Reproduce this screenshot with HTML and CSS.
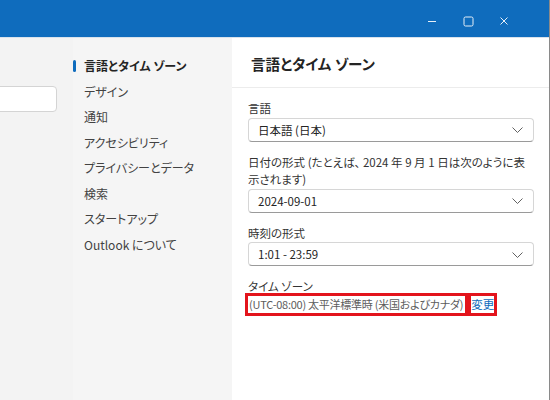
FILE: index.html
```html
<!DOCTYPE html>
<html lang="ja">
<head>
<meta charset="utf-8">
<link rel="stylesheet" href="styles.css">
</head>
<body>
<div class="window">
  <header class="titlebar">
    <div class="controls">
      <span class="ctl">
        <svg width="10" height="10" viewBox="0 0 10 10"><path d="M1 5.5h8" stroke="#fff" stroke-width="1"/></svg>
      </span>
      <span class="ctl">
        <svg width="11" height="11" viewBox="0 0 11 11"><rect x="1" y="1" width="9" height="9" rx="1.5" fill="none" stroke="#fff" stroke-width="1"/></svg>
      </span>
      <span class="ctl">
        <svg width="10" height="10" viewBox="0 0 10 10"><path d="M1.5 1.5l7 7M8.5 1.5l-7 7" stroke="#fff" stroke-width="1"/></svg>
      </span>
    </div>
  </header>
  <div class="body">
    <aside class="leftpane">
      <div class="search"></div>
    </aside>
    <nav class="nav">
      <div class="nav-item active"><span class="indicator"></span>言語とタイム ゾーン</div>
      <div class="nav-item">デザイン</div>
      <div class="nav-item">通知</div>
      <div class="nav-item">アクセシビリティ</div>
      <div class="nav-item">プライバシーとデータ</div>
      <div class="nav-item">検索</div>
      <div class="nav-item">スタートアップ</div>
      <div class="nav-item">Outlook について</div>
    </nav>
    <main class="content">
      <div class="content-header">言語とタイム ゾーン</div>
      <div class="form">
        <div class="field">
          <div class="label">言語</div>
          <div class="select"><span>日本語 (日本)</span><svg class="chev" width="11" height="6" viewBox="0 0 11 6"><path d="M0.5 0.5l5 5 5-5" fill="none" stroke="#616161" stroke-width="1"/></svg></div>
        </div>
        <div class="field">
          <div class="label">日付の形式 (たとえば、 2024 年 9 月 1 日は次のように表示されます)</div>
          <div class="select"><span>2024-09-01</span><svg class="chev" width="11" height="6" viewBox="0 0 11 6"><path d="M0.5 0.5l5 5 5-5" fill="none" stroke="#616161" stroke-width="1"/></svg></div>
        </div>
        <div class="field">
          <div class="label">時刻の形式</div>
          <div class="select"><span>1:01 - 23:59</span><svg class="chev" width="11" height="6" viewBox="0 0 11 6"><path d="M0.5 0.5l5 5 5-5" fill="none" stroke="#616161" stroke-width="1"/></svg></div>
        </div>
        <div class="field">
          <div class="label">タイム ゾーン</div>
          <div class="tz-row"><span class="tz boxed">(UTC-08:00) 太平洋標準時 (米国およびカナダ)</span><span class="link boxed">変更</span></div>
        </div>
      </div>
    </main>
  </div>
</div>
</body>
</html>
```
FILE: styles.css
```css
* { box-sizing: border-box; }
html, body {
  margin: 0;
  padding: 0;
  width: 550px;
  height: 400px;
  overflow: hidden;
  font-family: "Noto Sans CJK JP", sans-serif;
  font-feature-settings: "palt";
  font-size: 11.5px;
  color: #333;
  background: #f4f4f4;
}
.window {
  width: 550px;
  height: 400px;
  display: flex;
  flex-direction: column;
  border-right: 1px solid #8a8a8a;
}
.titlebar {
  height: 38px;
  background: #0f6cbd;
  border-bottom: 1px solid #d8e2ec;
  display: flex;
  justify-content: flex-end;
  flex-shrink: 0;
}
.controls {
  display: flex;
  padding-right: 27px;
  padding-top: 15px;
}
.ctl {
  width: 36px;
  height: 12px;
  display: flex;
  align-items: center;
  justify-content: center;
  opacity: 0.9;
}
.body {
  flex: 1;
  display: flex;
  min-height: 0;
}
.leftpane {
  width: 73px;
  background: #f3f3f3;
  padding-top: 48px;
}
.search {
  margin-left: -20px;
  width: 77px;
  height: 26px;
  background: #fff;
  border: 1px solid #d4d4d4;
  border-radius: 4px;
}
.nav {
  width: 159px;
  background: #f5f5f5;
  padding-top: 15px;
}
.nav-item {
  position: relative;
  height: 25.5px;
  line-height: 25.5px;
  padding-left: 11px;
  color: #424242;
  font-size: 12px;
  white-space: nowrap;
}
.nav-item.active {
  font-weight: 700;
  color: #242424;
}
.indicator {
  position: absolute;
  left: 0;
  top: 7px;
  width: 3px;
  height: 12px;
  border-radius: 2px;
  background: #0f6cbd;
}
.content {
  flex: 1;
  background: #fff;
  display: flex;
  flex-direction: column;
}
.content-header {
  height: 50px;
  line-height: 50px;
  padding-left: 19px;
  padding-top: 1px;
  font-size: 14.5px;
  font-weight: 700;
  color: #242424;
  border-bottom: 1px solid #ececec;
}
.form {
  padding: 12px 15px 0 16px;
  display: flex;
  flex-direction: column;
  gap: 12px;
}
.label {
  line-height: 17.5px;
  color: #333;
}
.select {
  height: 24px;
  border: 1px solid #d6d6d6;
  border-bottom-color: #9a9a9a;
  border-radius: 4px;
  display: flex;
  align-items: center;
  justify-content: space-between;
  padding: 0 10px 0 9px;
  color: #242424;
}
.select .chev { margin-top: 1px; }
.tz-row {
  display: flex;
  gap: 6px;
}
.boxed {
  display: inline-block;
  line-height: 17px;
  outline: 3px solid #e3141c;
}
.tz {
  color: #5c5c5c;
  font-size: 11px;
  letter-spacing: -0.25px;
  padding: 0 2px 0 1px;
}
.link {
  color: #0f6cbd;
  font-size: 11.5px;
}
```
